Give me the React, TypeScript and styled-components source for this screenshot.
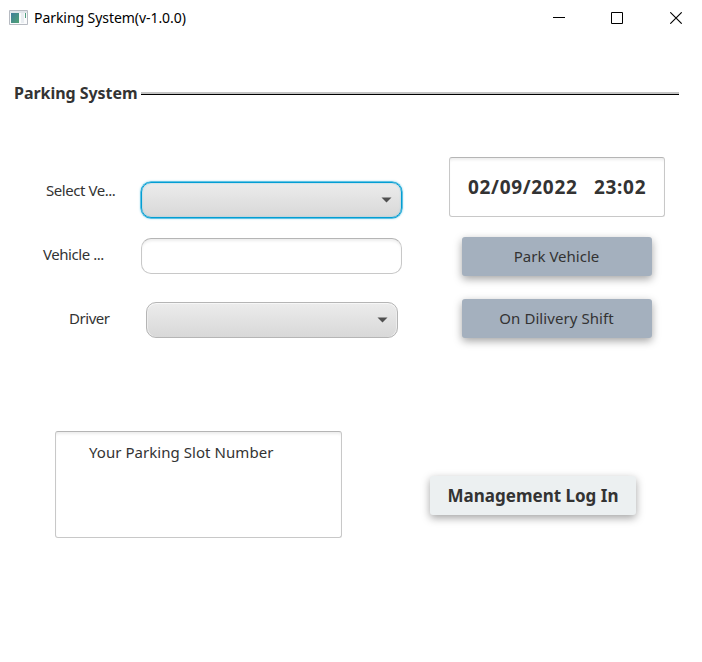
import React from "react";
import styled, { createGlobalStyle } from "styled-components";

const GlobalStyle = createGlobalStyle`
  * { box-sizing: border-box; }
  body { margin: 0; background: #fff; }
  button, input { font: inherit; color: inherit; }
`;

const Window = styled.main`
  width: 702px;
  height: 662px;
  overflow: hidden;
  background: #fff;
  color: #333;
  font: 15px/20px "Noto Sans", "Open Sans", sans-serif;
`;

const TitleBar = styled.header`
  height: 36px;
  display: flex;
  align-items: center;
  padding: 0 19px 0 9px;
  color: #000;
`;

const AppIcon = styled.svg`
  flex: none;
  margin-right: 6px;
`;

const Text = styled.span<{ $size?: number; $spacing?: number; $bold?: boolean }>`
  white-space: pre;
  font-size: ${(p) => p.$size ?? 15}px;
  letter-spacing: ${(p) => p.$spacing ?? 0}px;
  font-weight: ${(p) => (p.$bold ? 700 : 400)};
`;

const WindowControls = styled.nav`
  display: flex;
  gap: 45px;
  margin-left: auto;
`;

const ControlButton = styled.button`
  display: flex;
  padding: 0;
  border: 0;
  background: none;
  &:last-child { margin-left: 1px; }
`;

const Heading = styled.h1`
  display: flex;
  align-items: center;
  height: 20px;
  margin: 47px 23px 0 14px;
  font-size: 16px;
`;

const HeadingLabel = styled.span`
  width: 127px;
  flex: none;
`;

const Rule = styled.span`
  flex: 1;
  height: 3px;
  margin-top: 1px;
  border-bottom: 1px solid #000;
  background: #c4c4c4;
`;

const Content = styled.section`
  display: grid;
  grid-template-columns: 409px 216px;
  column-gap: 40px;
  margin-top: 54px;
`;

const Form = styled.form`
  display: flex;
  flex-direction: column;
  padding-top: 25px;
`;

const FieldRow = styled.div<{ $labelStart: number; $labelWidth: number }>`
  display: grid;
  grid-template-columns: ${(p) => p.$labelWidth}px auto;
  justify-content: start;
  padding-left: ${(p) => p.$labelStart}px;
  height: 36px;
  & + & { margin-top: 20px; }
  &:last-child { margin-top: 28px; }
`;

const FieldLabel = styled.label<{ $top: number }>`
  margin-top: ${(p) => p.$top}px;
  letter-spacing: -0.45px;
  white-space: pre;
`;

const Combo = styled.button<{ $width: number; $focused?: boolean }>`
  display: flex;
  align-items: center;
  justify-content: flex-end;
  width: ${(p) => p.$width}px;
  height: 36px;
  padding: 0 9px 0 0;
  border: 1px solid ${(p) => (p.$focused ? "#039ed3" : "#b5b5b5")};
  border-radius: 10px;
  background: linear-gradient(#ececec, #d8d8d8);
  box-shadow: ${(p) =>
    p.$focused
      ? "0 0 0 0.5px #039ed3, 0 0 2px 1px #a9dff0, inset 0 0 2px #8fcbe0"
      : "inset 0 1px 0 #f7f7f7, inset 1px 0 0 #ededed, inset -1px 0 0 #ededed"};
`;

const TextField = styled.input`
  width: 261px;
  height: 36px;
  padding: 0 10px;
  border: 1px solid #c8c8c8;
  border-top-color: #b5b5b5;
  border-radius: 10px;
  background: #fff;
  box-shadow: inset 0 3px 3px -1px #ededed;
  outline: none;
`;

const Side = styled.aside`
  display: flex;
  flex-direction: column;
  align-items: flex-start;
`;

const Panel = styled.div`
  border: 1px solid #c8c8c8;
  border-top-color: #b5b5b5;
  border-radius: 3px;
  box-shadow: inset 0 3px 3px -1px #ededed;
`;

const ClockPanel = styled(Panel)`
  display: flex;
  align-items: center;
  width: 216px;
  height: 60px;
  padding-left: 18px;
`;

const DateText = styled.time`
  width: 126px;
  font-size: 19px;
  font-weight: 700;
  letter-spacing: 0.68px;
`;

const TimeText = styled(DateText)`
  width: auto;
`;

const ActionButton = styled.button<{ $light?: boolean }>`
  display: flex;
  align-items: center;
  justify-content: center;
  width: ${(p) => (p.$light ? 206 : 190)}px;
  height: 39px;
  padding: ${(p) => (p.$light ? "0" : "0 1px 2px 0")};
  border: 0;
  border-radius: 3px;
  background: ${(p) => (p.$light ? "#ecf0f1" : "#a4b0be")};
  box-shadow: 0 3px 8px rgba(0, 0, 0, 0.36);
`;

const Actions = styled.div`
  display: flex;
  flex-direction: column;
  gap: 23px;
  margin: 20px 0 0 13px;
`;

const Footer = styled.section`
  display: flex;
  align-items: flex-start;
  gap: 88px;
  margin-top: 93px;
  padding-left: 55px;
`;

const SlotPanel = styled(Panel)`
  width: 287px;
  height: 107px;
  padding: 10px 0 0 33px;
`;

const LoginSlot = styled.div`
  padding-top: 45px;
`;

const Arrow = () => (
  <svg width="11" height="6" viewBox="0 0 11 6">
    <path d="M.5.5h10L5.5 5.5z" fill="#505050" />
  </svg>
);

export default function App() {
  return (
    <>
      <GlobalStyle />
      <Window>
        <TitleBar>
          <AppIcon width="19" height="16" viewBox="0 0 19 16">
            <defs>
              <linearGradient id="screen" x2="1" y2="1">
                <stop stopColor="#407d9b" />
                <stop offset="1" stopColor="#4fa374" />
              </linearGradient>
            </defs>
            <path d="M.5.5h18v14H.5z" fill="#fafbfc" stroke="#b7bbc2" />
            <path d="M1 1h17v2H1z" fill="#e1e5ea" />
            <path d="M2 3h8v10H2z" fill="url(#screen)" />
            <path d="M12 3h3v10h-3z" fill="#e9edf1" />
            <path d="M16 3h1v5h-1z" fill="#4e9c7d" />
          </AppIcon>
          <Text $size={14} $spacing={-0.06}>Parking System(v-1.0.0)</Text>
          <WindowControls>
            <ControlButton aria-label="Minimize">
              <svg width="13" height="12"><path d="M0 5.5h12" stroke="#000" /></svg>
            </ControlButton>
            <ControlButton aria-label="Maximize">
              <svg width="13" height="12"><path d="M.5.5h11v11H.5z" fill="none" stroke="#000" /></svg>
            </ControlButton>
            <ControlButton aria-label="Close">
              <svg width="13" height="12"><path d="M.3.3l11.4 11.4M11.7.3L.3 11.7" stroke="#000" strokeWidth="1.1" /></svg>
            </ControlButton>
          </WindowControls>
        </TitleBar>

        <Heading>
          <HeadingLabel><Text $size={16} $spacing={-0.05} $bold>Parking System</Text></HeadingLabel>
          <Rule />
        </Heading>

        <Content>
          <Form>
            <FieldRow $labelStart={46} $labelWidth={95}>
              <FieldLabel $top={-2}>Select Ve...</FieldLabel>
              <Combo type="button" $width={261} $focused><Arrow /></Combo>
            </FieldRow>
            <FieldRow $labelStart={43} $labelWidth={98}>
              <FieldLabel $top={6}>Vehicle ...</FieldLabel>
              <TextField />
            </FieldRow>
            <FieldRow $labelStart={69} $labelWidth={77}>
              <FieldLabel $top={6}>Driver</FieldLabel>
              <Combo type="button" $width={252}><Arrow /></Combo>
            </FieldRow>
          </Form>
          <Side>
            <ClockPanel>
              <DateText>02/09/2022</DateText>
              <TimeText>23:02</TimeText>
            </ClockPanel>
            <Actions>
              <ActionButton><Text>Park Vehicle</Text></ActionButton>
              <ActionButton><Text $spacing={0.07}>On Dilivery Shift</Text></ActionButton>
            </Actions>
          </Side>
        </Content>

        <Footer>
          <SlotPanel><Text $spacing={0.05}>Your Parking Slot Number</Text></SlotPanel>
          <LoginSlot>
            <ActionButton $light><Text $size={17} $bold>Management Log In</Text></ActionButton>
          </LoginSlot>
        </Footer>
      </Window>
    </>
  );
}
